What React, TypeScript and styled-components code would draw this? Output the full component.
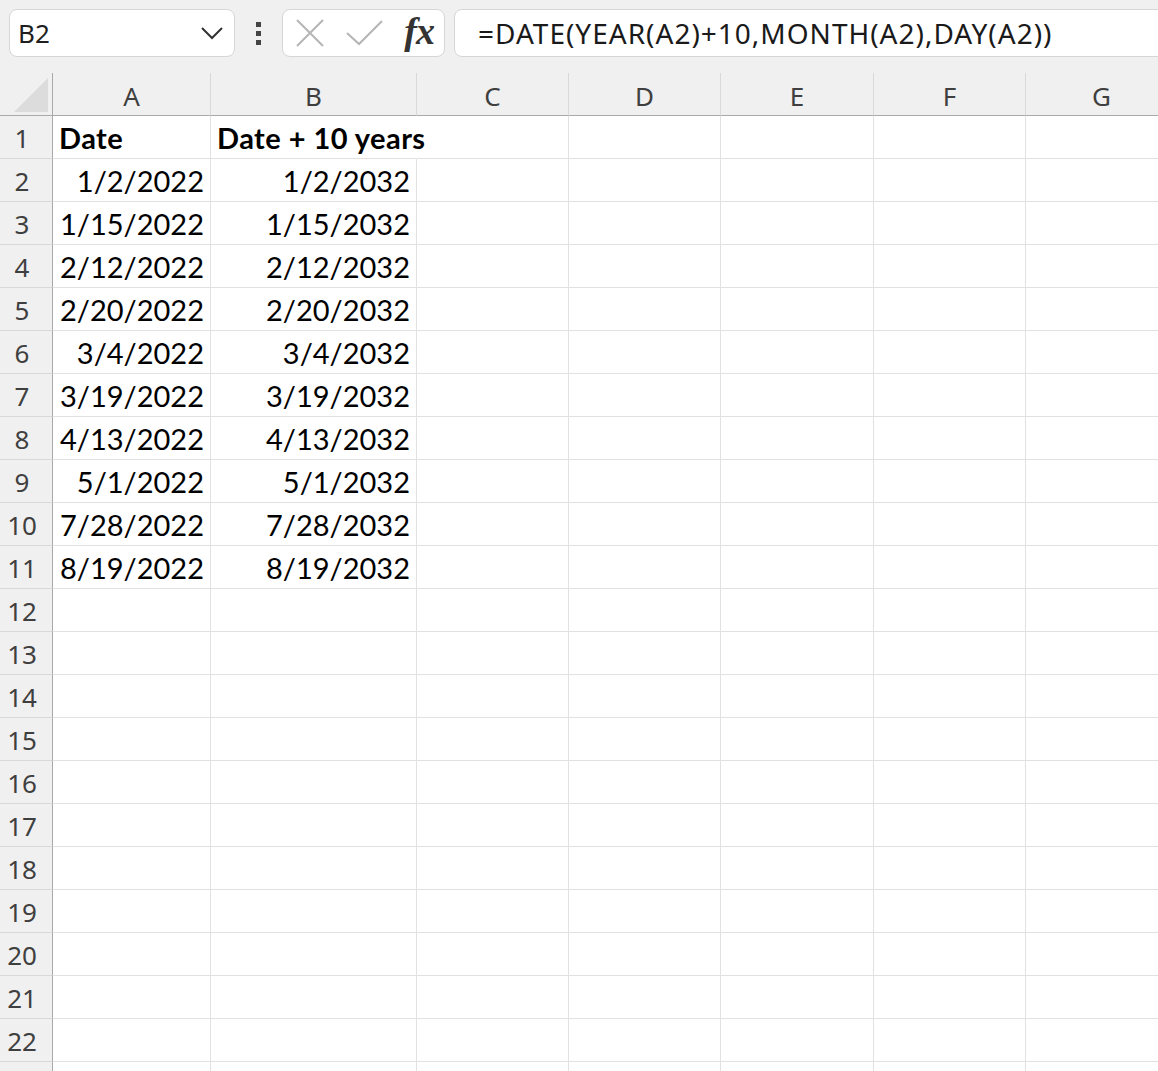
import styled, { createGlobalStyle } from "styled-components";

const GlobalStyle = createGlobalStyle`
  html, body {
    margin: 0;
    padding: 0;
    background: #ffffff;
  }
  * {
    box-sizing: border-box;
  }
`;

const Page = styled.div`
  width: 1158px;
  height: 1071px;
  overflow: hidden;
  background: #ffffff;
`;

const Toolbar = styled.div`
  height: 73px;
  display: flex;
  align-items: flex-start;
  padding: 9px 0 0 9px;
  background: #f0f0f0;
  overflow: hidden;
`;

const Box = styled.div`
  height: 48px;
  display: flex;
  align-items: center;
  background: #ffffff;
  border: 1px solid #d6d6d6;
  border-radius: 8px;
`;

const NameBox = styled(Box)`
  width: 226px;
  padding: 0 10px 0 8px;
  justify-content: space-between;
  font-family: "Noto Sans", "Open Sans", sans-serif;
  font-size: 26px;
  color: #1f1f1f;
`;

const Dots = styled.div`
  width: 47px;
  height: 48px;
  display: flex;
  flex-direction: column;
  align-items: center;
  justify-content: center;
  gap: 4px;
  > span {
    width: 5px;
    height: 5px;
    background: #444444;
  }
`;

const ActionBox = styled(Box)`
  width: 163px;
  padding: 0 10px 0 12px;
  justify-content: space-between;
`;

const Fx = styled.span`
  font-family: "Liberation Serif", "DejaVu Serif", serif;
  font-style: italic;
  font-weight: 700;
  font-size: 38px;
  color: #333333;
  letter-spacing: -1px;
  margin-top: -4px;
`;

const FormulaBox = styled(Box)`
  flex: 1;
  margin-left: 9px;
  margin-right: -20px;
  padding-left: 23px;
  font-family: "Noto Sans", "Open Sans", sans-serif;
  font-size: 28px;
  color: #1a1a1a;
  letter-spacing: 1px;
  white-space: nowrap;
`;

const Sheet = styled.div`
  display: grid;
  grid-template-columns: 53px 158px 206px 152px 152px 153px 152px 152px;
  grid-template-rows: 43px;
  grid-auto-rows: 43px;
`;

const Corner = styled.div`
  background: #f0f0f0;
  border-right: 1px solid #a9a9a9;
  border-bottom: 1px solid #a9a9a9;
  display: flex;
  align-items: flex-end;
  justify-content: flex-end;
  padding: 0 4px 3px 0;
`;

const ColHead = styled.div`
  background: #f0f0f0;
  border-right: 1px solid #d9d9d9;
  border-bottom: 1px solid #a9a9a9;
  display: flex;
  align-items: center;
  justify-content: center;
  padding-top: 3px;
  font-family: "Noto Sans", "Open Sans", sans-serif;
  font-size: 26px;
  color: #3f3f3f;
`;

const RowHead = styled.div`
  background: #f0f0f0;
  border-right: 1px solid #a9a9a9;
  border-bottom: 1px solid #d9d9d9;
  display: flex;
  align-items: center;
  justify-content: center;
  padding: 1px 8px 0 0;
  font-family: "Noto Sans", "Open Sans", sans-serif;
  font-size: 26px;
  color: #3f3f3f;
`;

const Cell = styled.div<{ $align?: "left" | "right"; $bold?: boolean; $spill?: boolean }>`
  position: relative;
  border-right: 1px solid ${(p) => (p.$spill ? "transparent" : "#e1e1e1")};
  border-bottom: 1px solid #e1e1e1;
  display: flex;
  align-items: center;
  justify-content: ${(p) => (p.$align === "right" ? "flex-end" : "flex-start")};
  padding: 1px 6px 0 6px;
  font-family: Lato, "Open Sans", sans-serif;
  font-size: 29px;
  font-weight: ${(p) => (p.$bold ? 700 : 400)};
  letter-spacing: ${(p) => (p.$bold ? "0.45px" : "0")};
  color: #000000;
  white-space: nowrap;
  overflow: visible;
  z-index: ${(p) => (p.$spill ? 1 : 0)};
`;

const columns = ["A", "B", "C", "D", "E", "F", "G"];

const dates: [string, string][] = [
  ["1/2/2022", "1/2/2032"],
  ["1/15/2022", "1/15/2032"],
  ["2/12/2022", "2/12/2032"],
  ["2/20/2022", "2/20/2032"],
  ["3/4/2022", "3/4/2032"],
  ["3/19/2022", "3/19/2032"],
  ["4/13/2022", "4/13/2032"],
  ["5/1/2022", "5/1/2032"],
  ["7/28/2022", "7/28/2032"],
  ["8/19/2022", "8/19/2032"],
];

// columns C to G are always empty
const emptyCells = (row: number) =>
  Array.from({ length: 5 }, (_, i) => <Cell key={`r${row}-${i}`} />);

const App = () => {
  const rows = Array.from({ length: 22 }, (_, i) => i + 1);

  return (
    <Page>
      <GlobalStyle />
      <Toolbar>
        <NameBox>
          <span>B2</span>
          <svg width="24" height="14" viewBox="0 0 24 14">
            <polyline points="2,2 12,12 22,2" fill="none" stroke="#333" strokeWidth="2" />
          </svg>
        </NameBox>
        <Dots>
          <span />
          <span />
          <span />
        </Dots>
        <ActionBox>
          <svg width="30" height="30" viewBox="0 0 30 30">
            <path d="M2 2 L28 28 M28 2 L2 28" stroke="#b5b5b5" strokeWidth="2" fill="none" />
          </svg>
          <svg width="38" height="28" viewBox="0 0 38 28">
            <polyline points="1,14 13,25 36,2" fill="none" stroke="#b5b5b5" strokeWidth="2" />
          </svg>
          <Fx>fx</Fx>
        </ActionBox>
        <FormulaBox>=DATE(YEAR(A2)+10,MONTH(A2),DAY(A2))</FormulaBox>
      </Toolbar>

      <Sheet>
        <Corner>
          <svg width="34" height="34" viewBox="0 0 34 34">
            <polygon points="0,34 34,34 34,0" fill="#dcdcdc" />
          </svg>
        </Corner>
        {columns.map((c) => (
          <ColHead key={c}>{c}</ColHead>
        ))}

        {rows.map((r) => {
          if (r === 1) {
            return [
              <RowHead key="h1">1</RowHead>,
              <Cell key="a1" $bold>Date</Cell>,
              <Cell key="b1" $bold $spill>Date + 10 years</Cell>,
              ...emptyCells(1),
            ];
          }
          const pair = dates[r - 2];
          return [
            <RowHead key={`h${r}`}>{r}</RowHead>,
            <Cell key={`a${r}`} $align="right">{pair ? pair[0] : ""}</Cell>,
            <Cell key={`b${r}`} $align="right">{pair ? pair[1] : ""}</Cell>,
            ...emptyCells(r),
          ];
        })}

        {/* partly visible row below the last numbered one */}
        <RowHead />
        <Cell />
        <Cell />
        {emptyCells(23)}
      </Sheet>
    </Page>
  );
};

export default App;
